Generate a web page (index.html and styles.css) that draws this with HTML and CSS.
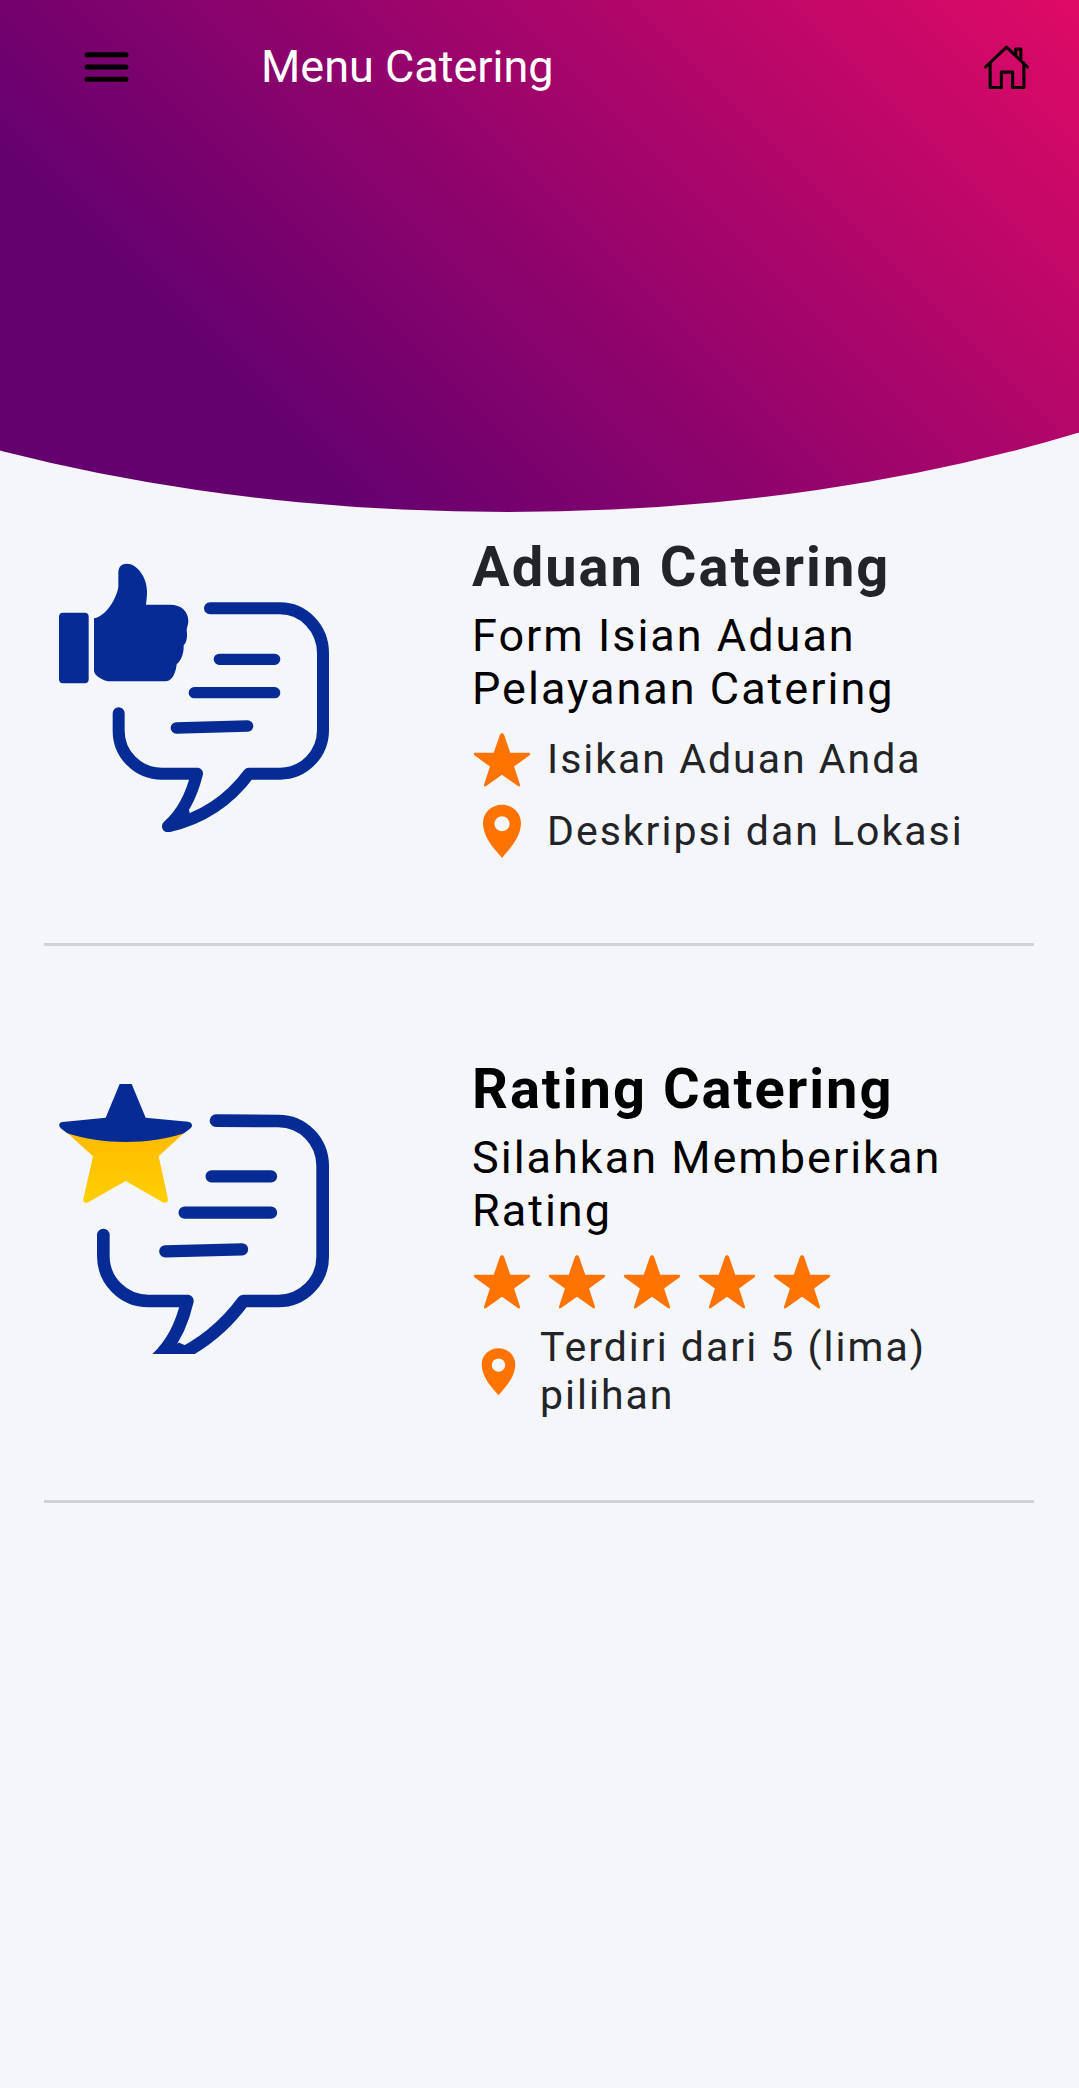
FILE: index.html
```html
<!DOCTYPE html>
<html lang="id">
<head>
<meta charset="utf-8">
<meta name="viewport" content="width=device-width, initial-scale=1">
<title>Menu Catering</title>
<link rel="stylesheet" href="styles.css">
</head>
<body>
<svg class="sprite" aria-hidden="true">
  <symbol id="star" viewBox="0 -3 174 174">
    <path d="M87 9c3 0 5 2 6 5l18 52h54c4 0 5 5 2 7l-45 33 17 52c1 5-2 7-6 4L87 130l-46 32c-4 3-7 1-6-4l17-52L7 73c-3-2-2-7 2-7h54l18-52c1-3 3-5 6-5z"/>
  </symbol>
  <symbol id="pin" viewBox="0 -3 174 174">
    <path fill-rule="evenodd" d="M87 8c-31 0-55 23-55 53 0 44 37 79 55 101 18-22 55-57 55-101 0-30-24-53-55-53zm0 33a22 22 0 1 1 0 44 22 22 0 0 1 0-44z"/>
  </symbol>
</svg>

<header class="hero">
  <div class="toolbar">
    <button class="tool" type="button" aria-label="Menu">
      <svg class="tool-icon" viewBox="0 0 44 44"><path d="M3 9.500h38M3 21.500h38M3 33.500h38" stroke-width="5"/></svg>
    </button>
    <h1 class="title">Menu Catering</h1>
    <a class="tool home" href="#" aria-label="Beranda">
      <svg class="tool-icon" viewBox="0 0 44 44"><path d="M1.500 21.500 22 2 42.500 21.500M6 17.500V41.500h11V26.500h11V41.500h11V17.500M31 10V4h5v10.500" stroke-width="3"/></svg>
    </a>
  </div>
</header>

<main class="list">
  <article class="item">
    <svg class="picture" viewBox="57 66 810 810" aria-hidden="true">
      <rect x="57" y="218" width="89" height="212" rx="12"/>
      <path d="M162 235C205 228 235 160 235 138V98C235 80 245 71 261 71C290 71 321 110 321 155C321 172 319 184 318 194H390C424 194 445 214 445 243C445 255 440 262 440 271C443 290 440 308 431 316C432 340 424 362 410 373C408 395 398 424 378 424H212C190 424 162 406 162 392Z"/>
      <g class="bubble">
        <path d="M510 205H720A129 135 0 0 1 849 340V570A129 131 0 0 1 720 701H627Q535 825 384 859Q445 805 471 701H365A129 129 0 0 1 236 572V520" stroke-width="36"/>
        <path d="M447 816 436 850 400 852 440 800Z" stroke-width="4" class="solid"/>
        <path d="M538 358H704M463 458H704M409 564 623 558" stroke-width="34"/>
      </g>
    </svg>
    <div class="info">
      <h2 class="name soft">Aduan Catering</h2>
      <p class="about">Form Isian Aduan Pelayanan Catering</p>
      <p class="row"><svg class="icon"><use href="#star"/></svg><span>Isikan Aduan Anda</span></p>
      <p class="row"><svg class="icon"><use href="#pin"/></svg><span>Deskripsi dan Lokasi</span></p>
    </div>
  </article>

  <article class="item">
    <svg class="picture" viewBox="57 60 810 810" aria-hidden="true">
      <defs>
        <linearGradient id="gold" x1="0" y1="0" x2="0" y2="1"><stop offset="0" stop-color="#ffba00"/><stop offset="1" stop-color="#ffd000"/></linearGradient>
      </defs>
      <path fill="url(#gold)" d="M72 198H442L356 277 384 405C385 415 377 419 368 415L257 351 145 415C135 419 128 415 130 405L159 277Z"/>
      <path d="M239 60H275L317 161 444 173C458 175 460 188 449 195L432 208C330 243 185 243 82 208L66 196C53 187 56 175 68 174L197 161Z"/>
      <g class="bubble">
        <path d="M528 170 715 171A133 135 0 0 1 848 306V578A133 133 0 0 1 715 711H610Q527 825 395 885L340 893Q415 830 442 711H325A135 135 0 0 1 190 576V513" stroke-width="38"/>
        <path d="M417 838 436 846 400 880 370 868Z" stroke-width="4" class="solid"/>
        <path d="M515 337H693M434 446H693M376 562 606 556" stroke-width="37"/>
      </g>
    </svg>
    <div class="info">
      <h2 class="name">Rating Catering</h2>
      <p class="about">Silahkan Memberikan Rating</p>
      <div class="row" role="img" aria-label="5 bintang">
        <svg class="icon"><use href="#star"/></svg>
        <svg class="icon"><use href="#star"/></svg>
        <svg class="icon"><use href="#star"/></svg>
        <svg class="icon"><use href="#star"/></svg>
        <svg class="icon"><use href="#star"/></svg>
      </div>
      <p class="row note"><svg class="icon small"><use href="#pin"/></svg><span>Terdiri dari 5 (lima) pilihan</span></p>
    </div>
  </article>
</main>
</body>
</html>
```

FILE: styles.css
```css
* {
  box-sizing: border-box;
}

body {
  margin: 0;
  min-height: 100vh;
  background: #f4f6fa;
  color: #222428;
  font-family: Roboto, "Noto Sans", sans-serif;
}

h1, h2, p {
  margin: 0;
}

.sprite {
  display: none;
}

.hero {
  height: 512px;
  background: linear-gradient(45deg, #65006f 23%, #df0a66 100%);
  clip-path: ellipse(99% 100% at 47% 0);
}

.toolbar {
  display: flex;
  align-items: center;
  padding: 34px 50px 0 84px;
}

.tool {
  display: flex;
  padding: 0;
  border: 0;
  background: none;
}

.tool-icon {
  width: 45px;
  height: 45px;
  fill: none;
  stroke: #000;
  stroke-linecap: round;
  stroke-linejoin: round;
}

.title {
  flex: 1;
  margin-left: 132px;
  color: #fff;
  font-size: 45px;
  font-weight: 400;
  line-height: 66px;
}

.list {
  padding: 22px 45px 22px 44px;
}

.item {
  display: grid;
  grid-template-columns: 270px 1fr;
  column-gap: 143px;
  padding: 0 0 76px 15px;
  border-bottom: 3px solid #d1d2d6;
}

.item + .item {
  padding-top: 110px;
}

.picture {
  width: 100%;
  margin-top: 28px;
  fill: #062b95;
}

.bubble {
  fill: none;
  stroke: #062b95;
  stroke-linecap: round;
  stroke-linejoin: round;
}

.solid {
  fill: #062b95;
}

.name {
  margin-bottom: 9px;
  color: #000;
  font-size: 56px;
  font-weight: 700;
  line-height: 66px;
  letter-spacing: 2px;
}

.soft {
  color: #222428;
}

.about {
  margin-bottom: 8px;
  color: #000;
  font-size: 45px;
  line-height: 53px;
  letter-spacing: 2px;
}

.row {
  display: flex;
  align-items: center;
  gap: 15px;
  min-height: 72px;
  font-size: 41px;
  line-height: 48px;
  letter-spacing: 2px;
}

.icon {
  flex: none;
  width: 60px;
  height: 60px;
  fill: #ff7300;
}

.note {
  padding: 6px 0 5px;
}

.small {
  width: 53px;
  height: 53px;
}
```
